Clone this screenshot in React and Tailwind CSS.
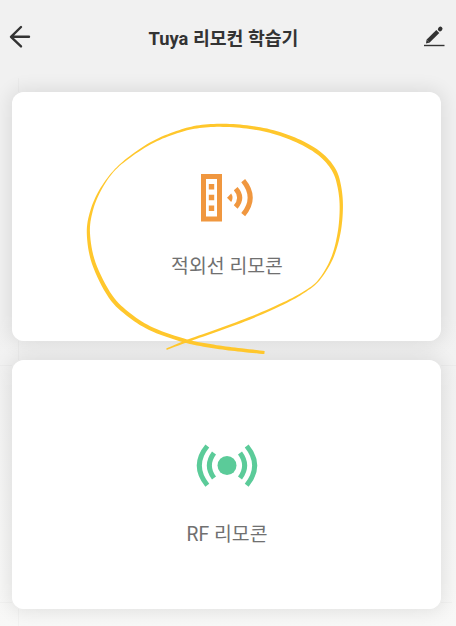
import React from "react";

// Pen samples: x, y, line width
const PEN = [
  [166.5, 349.2, 1.5], [188, 340.7, 2.3], [220, 329.4, 2.5], [253.3, 316.8, 2.4], [286.7, 301.8, 2],
  [306, 290.8, 1.5], [319, 280, 1.3], [331.7, 259, 2.1], [339, 233.3, 2.9], [341.3, 206.7, 3.3],
  [339, 185, 3.7], [333.3, 169, 4.1], [320, 154, 4.1], [300, 141.9, 4], [273.3, 132, 3.6],
  [246.7, 126.9, 3.3], [220, 125.3, 3.1], [196.7, 127, 2.8], [176.7, 132.2, 2.4], [153.3, 141.8, 2],
  [130, 156.8, 1.5], [113.3, 171.5, 1], [100, 190.5, 1.7], [91.5, 211, 2.5], [88.4, 233.3, 3.2],
  [93.8, 263.3, 3.8], [110.5, 296.5, 4.2], [130, 315.6, 4.1], [153.3, 329.8, 3.9], [186.7, 341.2, 3.7],
  [213.3, 346.4, 3.6], [238, 349.7, 3.6], [264.5, 352.5, 3.2],
];

function penOutline(pts) {
  const samples = [];
  for (let i = 0; i < pts.length - 1; i++) {
    const a = pts[Math.max(i - 1, 0)];
    const b = pts[i];
    const c = pts[i + 1];
    const d = pts[Math.min(i + 2, pts.length - 1)];
    for (let s = 0; s < 8; s++) {
      const t = s / 8;
      samples.push(
        [0, 1, 2].map(
          (k) =>
            0.5 *
            (2 * b[k] + (c[k] - a[k]) * t + (2 * a[k] - 5 * b[k] + 4 * c[k] - d[k]) * t * t +
              (3 * b[k] - a[k] - 3 * c[k] + d[k]) * t * t * t)
        )
      );
    }
  }
  samples.push(pts[pts.length - 1]);
  const left = [];
  const right = [];
  samples.forEach((p, i) => {
    const q = samples[Math.max(i - 1, 0)];
    const r = samples[Math.min(i + 1, samples.length - 1)];
    const dx = r[0] - q[0];
    const dy = r[1] - q[1];
    const len = Math.hypot(dx, dy) || 1;
    const ox = (-dy / len) * (p[2] / 2);
    const oy = (dx / len) * (p[2] / 2);
    left.push(`${(p[0] + ox).toFixed(2)} ${(p[1] + oy).toFixed(2)}`);
    right.unshift(`${(p[0] - ox).toFixed(2)} ${(p[1] - oy).toFixed(2)}`);
  });
  return `M${left.concat(right).join("L")}Z`;
}

// The shadow sits on a layer behind both cards so that neither card shades the other.
function Card({ icon, label }) {
  return (
    <button className="relative flex h-[249px] w-[429px] flex-col items-center rounded-xl bg-white pt-[76px] before:absolute before:inset-0 before:-z-10 before:rounded-xl before:shadow-[0_0_18px_3px_rgba(0,0,0,0.09)]">
      {icon}
      <span className="ml-px mt-[25px] whitespace-nowrap text-[19.4px] leading-7 text-[#707070]">{label}</span>
    </button>
  );
}

function InfraredIcon() {
  return (
    <svg width="60" height="60" viewBox="0 0 60 60" fill="none" className="h-[60px] w-[60px]">
      <path d="M6.5 8.5h16v42.5h-16z" stroke="#F0973F" strokeWidth="5" />
      <path d="M11.8 16h5.4v5.5h-5.4zM11.8 26.8h5.4v5.5h-5.4zM11.8 37.4h5.4v5.5h-5.4z" fill="#F0973F" />
      <path d="M30 29.7l4.2-4.2q2.6 4.2 0 8.4z" fill="#F0973F" />
      <path d="M38.7 20.7Q46.7 29.7 38.7 39M46.2 12.7Q60.2 29.7 46.2 46.6" stroke="#F0973F" strokeWidth="5" />
    </svg>
  );
}

function RadioIcon() {
  return (
    <svg width="62" height="60" viewBox="-0.5 0 62 60" fill="none" className="h-[60px] w-[62px]">
      <circle cx="30.5" cy="29.5" r="9.5" fill="#5BCB99" />
      <path
        d="M17.5 17Q8.2 29.5 17.5 42M10.8 10Q-5.2 29.5 10.8 49.3M43.5 17Q52.8 29.5 43.5 42M50.2 10Q66.2 29.5 50.2 49.3"
        stroke="#5BCB99"
        strokeWidth="5"
      />
    </svg>
  );
}

export default function App() {
  return (
    <main className="relative isolate h-[626px] w-[456px] overflow-hidden bg-linear-to-b from-[#f1f1f1] via-[#f1f1f1] to-[#f8f8f7] font-['Roboto','Noto_Sans_CJK_KR',sans-serif]">
      <header className="flex h-[74px] items-center justify-between pl-[9px] pr-[11px]">
        <button aria-label="뒤로" className="h-6 w-6">
          <svg width="24" height="24" viewBox="0 0 24 24" fill="none" stroke="#333" strokeWidth="2.4" strokeLinecap="round" strokeLinejoin="round">
            <path d="M12 2L2 11.8L12 21.4M2.5 11.8H20" />
          </svg>
        </button>
        <h1 className="mr-[9px] whitespace-nowrap pt-[3px] text-[18.3px] font-bold leading-6 text-[#333]">Tuya 리모컨 학습기</h1>
        <button aria-label="편집" className="h-6 w-[22px]">
          <svg width="22" height="24" viewBox="0 0 22 24" fill="none">
            <path d="M5.2 16L14.8 6.4" stroke="#333" strokeWidth="4.2" />
            <path d="M3 18.6L3.6 14.4L6.9 17.6Z" fill="#333" />
            <path d="M17 4.2l.4-.4" stroke="#333" strokeWidth="4.2" strokeLinecap="round" />
            <path d="M1 20.5h20.5" stroke="#333" strokeWidth="1.4" />
          </svg>
        </button>
      </header>
      <div className="flex flex-col gap-[18.5px] pl-3 pt-[18px]">
        <Card icon={<InfraredIcon />} label="적외선 리모콘" />
        <Card icon={<RadioIcon />} label="RF 리모콘" />
      </div>
      <svg className="pointer-events-none absolute left-0 top-0" width="456" height="626" viewBox="0 0 456 626">
        <path d="M18.5 78V92M18.5 341V360M18.5 609V626M0 365.5H12M441 365.5H456M0 602.5H12M441 602.5H452" stroke="#000" strokeOpacity="0.025" />
        <path d={penOutline(PEN)} fill="#FFC72C" />
      </svg>
    </main>
  );
}
